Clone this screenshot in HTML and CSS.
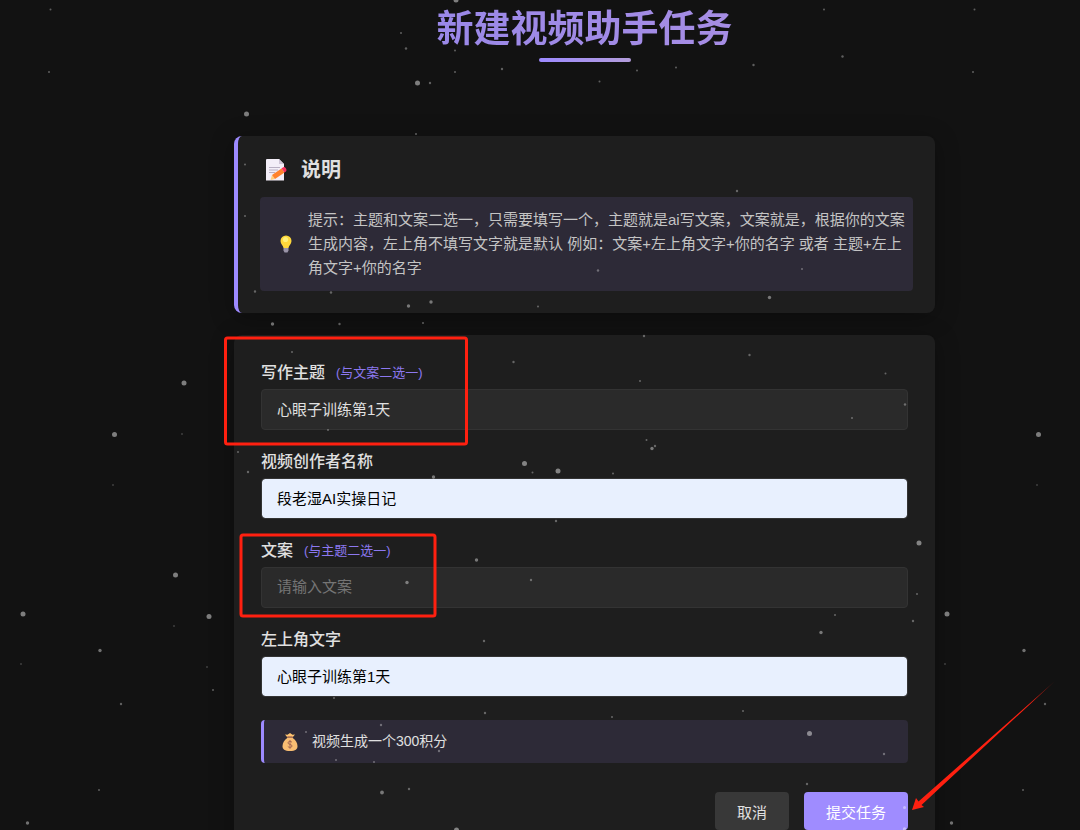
FILE: index.html
```html
<!DOCTYPE html>
<html lang="zh-CN">
<head>
<meta charset="utf-8">
<title>新建视频助手任务</title>
<link rel="stylesheet" href="styles.css">
</head>
<body>
<div class="page">
  <main class="content">
    <header class="page-header">
      <h1 class="page-title">新建视频助手任务</h1>
      <div class="title-rule"></div>
    </header>

    <section class="card intro">
      <h2 class="intro-title">
        <svg class="icon-memo" viewBox="0 0 22 24" aria-hidden="true">
          <path d="M2 1h12l5 5v16.500H1V2q0-1 1-1z" fill="#f3eef8"/>
          <path d="M14 1l5 5h-5z" fill="#cdc4d6"/>
          <path d="M4 9.500h11M4 12h9M4 14.500h6" stroke="#b9b0c4" stroke-width="1"/>
          <path d="M5.500 22l1.500-5 3 4z" fill="#ffce7c"/>
          <path d="M7 17l9.500-6.500 3 4L10 21z" fill="#ff822d"/>
          <path d="M16.500 10.500l1.600-1.200q1.400-.8 2.500.6 1.500 2 .4 3.300l-1.500 1.300z" fill="#f8315f"/>
        </svg>
        说明
      </h2>
      <div class="tip">
        <svg class="icon-bulb" viewBox="0 0 12 18" aria-hidden="true">
          <path d="M6 .5a5.500 5.500 0 0 0-5.500 5.500c0 3 2.700 4.500 3 7h5c.3-2.500 3-4 3-7A5.500 5.500 0 0 0 6 .5z" fill="#ffd83b"/>
          <circle cx="5.500" cy="4.500" r="2.600" fill="#fff07a"/>
          <path d="M3.500 13h5v2.500l-1 2h-3l-1-2z" fill="#9a94a8"/>
        </svg>
        <p class="tip-text">提示：主题和文案二选一，只需要填写一个，主题就是ai写文案，文案就是，根据你的文案生成内容，左上角不填写文字就是默认 例如：文案+左上角文字+你的名字 或者 主题+左上角文字+你的名字</p>
      </div>
    </section>

    <form class="card form">
      <div class="fields">
        <div class="field">
          <label class="label" for="topic">写作主题 <span class="hint">(与文案二选一)</span></label>
          <input class="input" id="topic" type="text" value="心眼子训练第1天">
        </div>
        <div class="field">
          <label class="label" for="author">视频创作者名称</label>
          <input class="input filled" id="author" type="text" value="段老湿AI实操日记">
        </div>
        <div class="field">
          <label class="label" for="copy">文案 <span class="hint">(与主题二选一)</span></label>
          <input class="input" id="copy" type="text" placeholder="请输入文案">
        </div>
        <div class="field">
          <label class="label" for="corner">左上角文字</label>
          <input class="input filled" id="corner" type="text" value="心眼子训练第1天">
        </div>
      </div>
      <div class="cost">
        <svg class="icon-bag" viewBox="0 0 16 18" aria-hidden="true">
          <path d="M3 1.500l2.500.3L8 0l2.500 1.800 2.500-.3-2.500 3h-5z" fill="#ffc470"/>
          <path d="M5.500 4.800h5c3 2.200 5 5.200 5 8.200 0 3.500-2 5-7.500 5S.5 16.500.5 13c0-3 2-6 5-8.200z" fill="#f8bd72"/>
          <path d="M5.300 4h5.400" stroke="#a56953" stroke-width="1.400"/>
          <path d="M10 9.300q-.8-1-2.100-.9-1.900.1-1.900 1.500 0 1.200 2 1.500t2 1.600q0 1.400-2 1.400-1.400 0-2.200-1M8 7v8.800" fill="none" stroke="#a56953" stroke-width="1"/>
        </svg>
        <span>视频生成一个300积分</span>
      </div>
      <div class="actions">
        <button class="btn cancel" type="button">取消</button>
        <button class="btn submit" type="submit">提交任务</button>
      </div>
    </form>
  </main>

  <svg class="overlay" width="1080" height="830" viewBox="0 0 1080 830" aria-hidden="true">
    <g class="stars big">
      <circle cx="456" cy="0" r="2.500"/><circle cx="417.500" cy="83" r="2.500"/><circle cx="246.500" cy="114" r="2.500"/>
      <circle cx="184" cy="383" r="2.500"/><circle cx="114.500" cy="434.500" r="2.500"/><circle cx="175.500" cy="575" r="2.500"/>
      <circle cx="23" cy="614" r="2.500"/><circle cx="209" cy="616.500" r="2.500"/><circle cx="1038.500" cy="434.500" r="2.500"/>
      <circle cx="524.500" cy="463.500" r="2.500"/><circle cx="558" cy="471" r="2.500"/><circle cx="919" cy="543" r="2.500"/>
      <circle cx="947" cy="614" r="2.500"/><circle cx="809.500" cy="733.500" r="2.500"/><circle cx="456.500" cy="830" r="2.500"/>
    </g>
    <g class="stars mid">
      <circle cx="100" cy="650.500" r="1.700"/><circle cx="27.500" cy="823" r="1.700"/><circle cx="272.500" cy="324" r="1.700"/>
      <circle cx="408.500" cy="306" r="1.700"/><circle cx="431" cy="302" r="1.700"/><circle cx="769.500" cy="297.500" r="1.700"/>
      <circle cx="652" cy="448.500" r="1.700"/><circle cx="433.500" cy="477" r="1.700"/><circle cx="476.500" cy="560" r="1.700"/>
      <circle cx="407" cy="582.500" r="1.700"/><circle cx="821" cy="632.500" r="1.700"/><circle cx="1024" cy="650.500" r="1.700"/>
      <circle cx="382" cy="792.500" r="1.900"/><circle cx="951.500" cy="823" r="1.700"/><circle cx="904.500" cy="807.500" r="1.500"/>
      <circle cx="904.500" cy="829" r="1.700"/>
    </g>
    <g class="stars small">
      <circle cx="50.500" cy="9.500" r="1"/><circle cx="49" cy="72" r="1"/><circle cx="401" cy="33" r="1"/>
      <circle cx="406" cy="48.500" r="1.200"/><circle cx="455" cy="50.500" r="1"/><circle cx="455" cy="72" r="1"/>
      <circle cx="502" cy="69" r="1.200"/><circle cx="430" cy="83" r="1.200"/><circle cx="599.500" cy="81.500" r="1"/>
      <circle cx="637" cy="70.500" r="1"/><circle cx="676" cy="67.500" r="1"/><circle cx="753.500" cy="65" r="1.200"/>
      <circle cx="842.500" cy="56.500" r="1.200"/><circle cx="824" cy="9.500" r="1"/><circle cx="974.500" cy="9.500" r="1"/>
      <circle cx="973" cy="72" r="1"/><circle cx="416" cy="134" r="1"/><circle cx="245" cy="164.500" r="1"/>
      <circle cx="245" cy="216" r="1"/><circle cx="255" cy="291.500" r="1.200"/><circle cx="331" cy="292.500" r="1.200"/>
      <circle cx="538" cy="306.500" r="1"/><circle cx="339.500" cy="324" r="1.200"/><circle cx="423" cy="323" r="1"/>
      <circle cx="737" cy="191" r="1.200"/><circle cx="598" cy="270.500" r="1.200"/><circle cx="802" cy="269" r="1"/>
      <circle cx="644" cy="336" r="1.200"/><circle cx="749.500" cy="355" r="1.200"/><circle cx="513.500" cy="362" r="1.200"/>
      <circle cx="640" cy="381" r="1"/><circle cx="885.500" cy="373.500" r="1"/><circle cx="905" cy="404.500" r="1.200"/>
      <circle cx="852" cy="418" r="1"/><circle cx="646.500" cy="440" r="1"/><circle cx="655" cy="446" r="1.200"/>
      <circle cx="532.500" cy="472.500" r="1"/><circle cx="613" cy="473.500" r="1"/><circle cx="292" cy="352" r="1"/>
      <circle cx="328" cy="430" r="1"/><circle cx="238" cy="452" r="1"/><circle cx="248" cy="472" r="1.200"/>
      <circle cx="182" cy="434" r=".8"/><circle cx="113" cy="485" r=".8"/><circle cx="174" cy="626" r=".8"/>
      <circle cx="21" cy="664" r=".8"/><circle cx="207" cy="667" r=".8"/><circle cx="213" cy="690" r="1"/>
      <circle cx="121" cy="704" r="1.200"/><circle cx="99" cy="790" r="1"/><circle cx="1037" cy="485" r=".8"/>
      <circle cx="556" cy="521" r="1.200"/><circle cx="531" cy="580" r="1.200"/><circle cx="917" cy="594" r="1"/>
      <circle cx="835" cy="615" r="1"/><circle cx="913" cy="621" r="1.200"/><circle cx="484" cy="641" r="1.200"/>
      <circle cx="945" cy="664" r=".8"/><circle cx="334" cy="698" r="1"/><circle cx="485" cy="713" r="1.200"/>
      <circle cx="612" cy="717" r="1"/><circle cx="743" cy="711" r="1"/><circle cx="381" cy="725" r="1.200"/>
      <circle cx="306" cy="732" r="1"/><circle cx="439" cy="751" r="1.200"/><circle cx="336" cy="760" r="1"/>
      <circle cx="374" cy="762" r="1"/><circle cx="884" cy="754" r="1.200"/><circle cx="409" cy="789" r="1.200"/>
      <circle cx="807" cy="784" r="1.200"/><circle cx="1045" cy="704" r="1.200"/><circle cx="1023" cy="790" r="1"/>
    </g>
    <defs>
      <linearGradient id="arrow-fade" gradientUnits="userSpaceOnUse" x1="1056" y1="680" x2="1030" y2="703">
        <stop offset="0" stop-color="#ff2010" stop-opacity="0.3"/>
        <stop offset="1" stop-color="#ff2010"/>
      </linearGradient>
    </defs>
    <rect class="mark" x="225.500" y="338" width="241" height="106" rx="2"/>
    <rect class="mark" x="241" y="535" width="194" height="81" rx="2"/>
    <path d="M1055 681L921.500 805L924 807L912 810L916 798L918.500 801.500Z" fill="url(#arrow-fade)"/>
  </svg>
</div>
</body>
</html>
```

FILE: styles.css
```css
* {
  box-sizing: border-box;
}

body {
  margin: 0;
  background: #121212;
  color: #e0e0e0;
  font-family: "Liberation Sans", "Noto Sans CJK SC", sans-serif;
  font-size: 15px;
}

.page {
  position: relative;
  height: 100vh;
  overflow: hidden;
  padding-left: 89px;
}

.content {
  max-width: 701px;
  margin: 0 auto;
}

.page-header {
  display: flex;
  flex-direction: column;
  align-items: center;
  margin-bottom: 74px;
  padding-top: 2px;
}

.page-title {
  margin: 0;
  font-size: 37px;
  line-height: 56px;
  font-weight: 700;
  background: linear-gradient(90deg, #9a88e8, #a68de4);
  -webkit-background-clip: text;
  background-clip: text;
  color: transparent;
}

.title-rule {
  width: 92px;
  height: 4px;
  border-radius: 2px;
  background: linear-gradient(90deg, #9d8aff, #b39ddb);
}

.card {
  background: #1e1e1e;
  border-radius: 8px;
  box-shadow: 0 4px 24px rgba(0, 0, 0, 0.3);
}

.intro {
  margin-bottom: 22px;
  padding: 22px;
  border-left: 4px solid #9d8aff;
}

.intro-title {
  display: flex;
  align-items: center;
  gap: 14px;
  margin: 0 0 15px;
  padding-left: 5px;
  font-size: 20px;
  line-height: 24px;
  font-weight: 700;
}

.icon-memo {
  width: 22px;
  height: 24px;
}

.tip {
  display: flex;
  align-items: center;
  gap: 16px;
  padding: 11px 6px 11px 20px;
  border-radius: 4px;
  background: #2d2a37;
}

.icon-bulb {
  flex: none;
  width: 12px;
  height: 18px;
}

.tip-text {
  margin: 0;
  line-height: 24px;
  color: #c4c4c4;
}

.form {
  padding: 25px 27px;
}

.fields {
  display: grid;
  gap: 19px;
}

.field {
  display: grid;
  gap: 3px;
}

.label {
  display: flex;
  align-items: center;
  gap: 11px;
  font-size: 16px;
  line-height: 26px;
  font-weight: 500;
}

.hint {
  color: #8c78f0;
  font-size: 13px;
  font-weight: 400;
}

.input {
  width: 100%;
  height: 41px;
  padding: 0 15px 2px;
  border: 1px solid #333333;
  border-radius: 4px;
  background: #2a2a2a;
  color: #e0e0e0;
  font: inherit;
  outline: none;
}

.input::placeholder {
  color: #757575;
}

.input.filled {
  background: #e8f0fe;
  background-clip: padding-box;
  color: #000000;
}

.cost {
  display: flex;
  align-items: center;
  gap: 14px;
  margin-top: 23px;
  padding: 11px 18px;
  border-left: 3px solid #9d8aff;
  border-radius: 4px;
  background: #2d2a37;
  font-size: 14px;
  line-height: 21px;
}

.icon-bag {
  width: 16px;
  height: 18px;
}

.actions {
  display: flex;
  justify-content: flex-end;
  gap: 15px;
  margin-top: 29px;
}

.btn {
  height: 38px;
  padding: 0 22px;
  border: 0;
  border-radius: 4px;
  font: inherit;
}

.cancel {
  background: #383838;
  color: #e0e0e0;
}

.submit {
  background: #9f8cff;
  color: #ffffff;
}

.overlay {
  position: absolute;
  top: 0;
  left: 0;
  pointer-events: none;
}

.stars {
  fill: #ffffff;
}

.big {
  opacity: 0.45;
}

.mid {
  opacity: 0.4;
}

.small {
  opacity: 0.32;
}

.mark {
  fill: none;
  stroke: #ff2010;
  stroke-width: 3;
}
```
